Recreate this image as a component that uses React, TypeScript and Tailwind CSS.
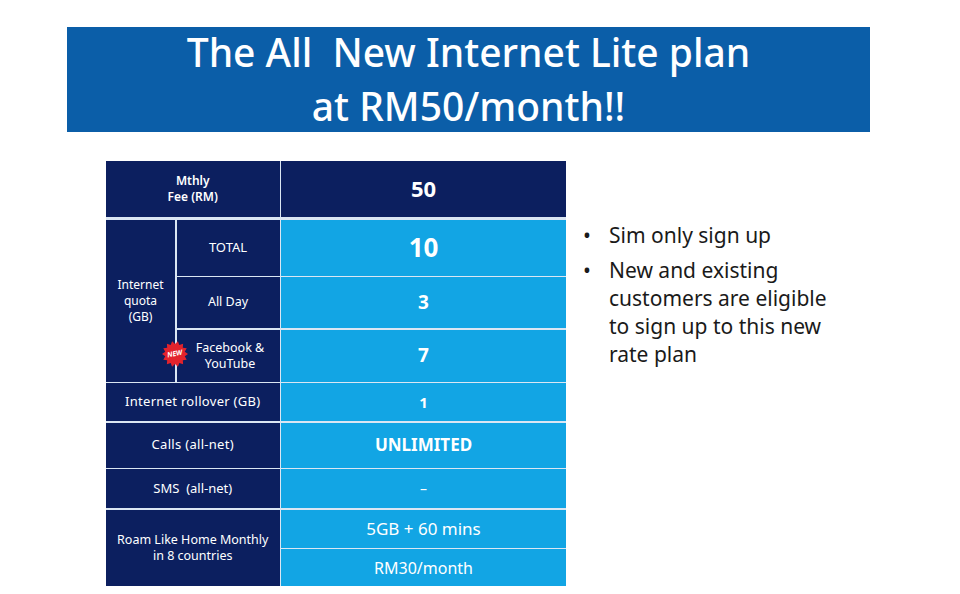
// App.tsx
import React from 'react';

const font = { fontFamily: '"Noto Sans", "Open Sans", Arial, sans-serif' };

// Starburst "NEW" badge
function NewBadge() {
  const pts: string[] = [];
  const n = 14;
  for (let i = 0; i < n * 2; i++) {
    const r = i % 2 === 0 ? 13 : 10;
    const a = (Math.PI * i) / n;
    pts.push(`${14 + r * Math.cos(a)},${14 + r * Math.sin(a)}`);
  }
  return (
    <div className="absolute left-[-16px] top-[10px] w-[28px] h-[28px] flex items-center justify-center">
      <svg width="28" height="28" viewBox="0 0 28 28" className="absolute inset-0">
        <polygon points={pts.join(' ')} fill="#e3232c" />
      </svg>
      <span className="relative text-white text-[7px] font-bold italic leading-none -rotate-12">NEW</span>
    </div>
  );
}

function PlanTable() {
  const navy = 'bg-[#0c1f5f] text-white flex items-center justify-center text-center';
  const sky = 'bg-[#12a5e4] text-white flex items-center justify-center text-center';
  return (
    <div className="w-[460px] bg-[#dbe6f3] grid grid-cols-[69px_103px_1fr] grid-rows-[57px_56px_51px_52px_38px_45px_39px_38px_37px] gap-[1.5px]">
      {/* header */}
      <div className={`${navy} col-span-2 text-[12px] font-semibold leading-[16px] mb-[1.5px]`}>
        Mthly<br />Fee (RM)
      </div>
      <div className={`${navy} text-[22px] font-bold mb-[1.5px]`}>50</div>

      {/* internet quota group */}
      <div className={`${navy} row-span-3 text-[12px] leading-[16px]`}>
        Internet<br />quota<br />(GB)
      </div>
      <div className={`${navy} text-[13px]`}>TOTAL</div>
      <div className={`${sky} text-[26px] font-bold`}>10</div>

      <div className={`${navy} text-[12.5px]`}>All Day</div>
      <div className={`${sky} text-[19px] font-bold`}>3</div>

      <div className={`${navy} relative text-[12.5px] leading-[16px]`}>
        <NewBadge />
        <span className="pl-[4px]">Facebook &amp;<br />YouTube</span>
      </div>
      <div className={`${sky} text-[19px] font-bold`}>7</div>

      <div className={`${navy} col-span-2 text-[13px] tracking-[0.3px]`}>Internet rollover (GB)</div>
      <div className={`${sky} text-[15px] font-bold`}>1</div>

      <div className={`${navy} col-span-2 text-[13px] tracking-[0.3px]`}>Calls (all-net)</div>
      <div className={`${sky} text-[17px] font-bold`}>UNLIMITED</div>

      <div className={`${navy} col-span-2 text-[13px]`}>SMS&nbsp; (all-net)</div>
      <div className={`${sky} text-[14px]`}>–</div>

      <div className={`${navy} col-span-2 row-span-2 text-[12.5px] leading-[16px]`}>
        Roam Like Home Monthly<br />in 8 countries
      </div>
      <div className={`${sky} text-[17px]`}>5GB + 60 mins</div>
      <div className={`${sky} text-[16px]`}>RM30/month</div>
    </div>
  );
}

export default function App() {
  return (
    <div className="w-[960px] h-[594px] bg-white pt-[27px] pl-[67px] overflow-hidden" style={font}>
      <div className="w-[803px] h-[105px] bg-[#0b5ea8] text-white flex flex-col items-center justify-center text-[39px] font-medium leading-[54px] pb-[2px]">
        <div>The All&nbsp; New Internet Lite plan</div>
        <div>at RM50/month!!</div>
      </div>

      <div className="flex mt-[29px] ml-[39px]">
        <PlanTable />
        <ul className="ml-[17px] mt-[60px] text-[21px] leading-[28px] text-[#1a1a1a] flex flex-col gap-[7px]">
          <li className="flex">
            <span className="w-[26px]">•</span>
            <span>Sim only sign up</span>
          </li>
          <li className="flex">
            <span className="w-[26px]">•</span>
            <span>
              New and existing<br />customers are eligible<br />to sign up to this new<br />rate plan
            </span>
          </li>
        </ul>
      </div>
    </div>
  );
}
